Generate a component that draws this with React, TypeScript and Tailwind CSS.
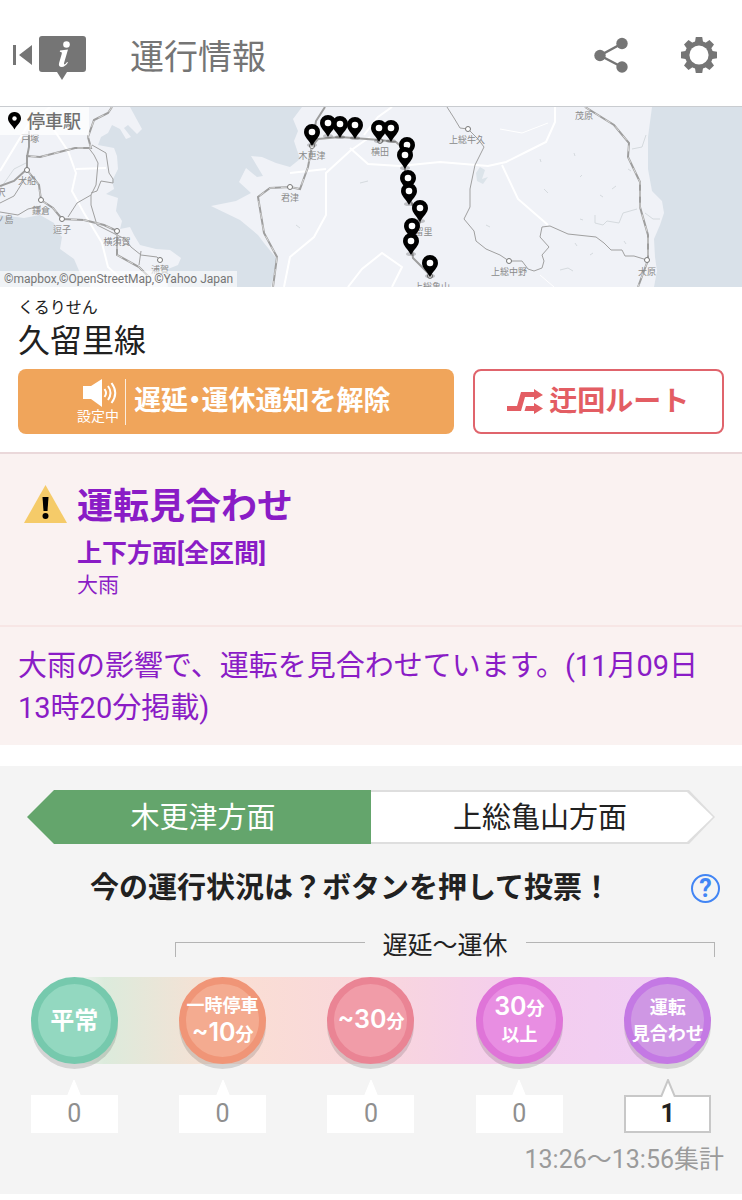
import { useState } from 'react'
import clsx from 'clsx'

type Stop = { x: number; y: number }

const stops: Stop[] = [
  { x: 328, y: 16 },
  { x: 340, y: 17 },
  { x: 355, y: 18 },
  { x: 312, y: 25 },
  { x: 379, y: 21 },
  { x: 391, y: 21 },
  { x: 407, y: 38 },
  { x: 405, y: 48 },
  { x: 408, y: 71 },
  { x: 409, y: 84 },
  { x: 420, y: 101 },
  { x: 412, y: 119 },
  { x: 411, y: 134 },
  { x: 430, y: 156 },
]

const places = [
  { name: '戸塚', x: 30, y: 35 },
  { name: '大船', x: 27, y: 77 },
  { name: '沢', x: 1, y: 89 },
  { name: '鎌倉', x: 41, y: 107 },
  { name: '江ノ島', x: 0, y: 116 },
  { name: '逗子', x: 62, y: 126 },
  { name: '横須賀', x: 117, y: 138 },
  { name: '浦賀', x: 160, y: 166 },
  { name: '木更津', x: 312, y: 52 },
  { name: '君津', x: 290, y: 94 },
  { name: '横田', x: 380, y: 48 },
  { name: '久留里', x: 419, y: 128 },
  { name: '上総亀山', x: 432, y: 183 },
  { name: '上総牛久', x: 467, y: 36 },
  { name: '上総中野', x: 509, y: 168 },
  { name: '茂原', x: 584, y: 12 },
  { name: '大原', x: 647, y: 168 },
]

const stations: Stop[] = [
  { x: 27, y: 63 },
  { x: 41, y: 93 },
  { x: 62, y: 112 },
  { x: 117, y: 124 },
  { x: 160, y: 153 },
  { x: 290, y: 80 },
  { x: 312, y: 39 },
  { x: 380, y: 34 },
  { x: 430, y: 169 },
  { x: 468, y: 22 },
  { x: 509, y: 154 },
  { x: 647, y: 153 },
]

export default function App() {
  return (
    <div className="min-h-screen bg-white font-['Roboto','Noto_Sans_CJK_JP',sans-serif] text-[#212121]">
      <Header />
      <RouteMap />
      <LineInfo />
      <Alert />
      <Vote />
    </div>
  )
}

function Header() {
  return (
    <header className="flex h-[106px] items-center pt-1 pr-6 pl-3 text-[#757575]">
      <button aria-label="戻る" className="pt-1">
        <svg width="76" height="46" viewBox="0 0 76 46" fill="currentColor">
          <path d="M1 11h3v20H1zM20 11v20L7 21z" />
          <path d="M30 2h41q3 0 3 3v30q0 3-3 3H55l-5 8-5-8H30q-3 0-3-3V5q0-3 3-3z" />
          <circle cx="54.500" cy="10.500" r="3.300" fill="#fff" />
          <path d="M48 16.500l8-1-3.800 13c-.5 2 .2 2.300 1.200 1.400l1.700-2 .9.700c-2 3-4 4.400-6.200 4.400-2.400 0-3.400-1.500-2.700-4l2.600-9c.5-1.800-.2-2.200-1.900-2.300z" fill="#fff" />
        </svg>
      </button>
      <h1 className="ml-[42px] flex-1 pt-1 text-[34px] leading-[48px]">運行情報</h1>
      <button aria-label="共有" className="mr-[51px]">
        <svg width="36" height="36" viewBox="0 0 36 36" fill="currentColor">
          <path d="M29 6.500L7 18.500l22 11.500" fill="none" stroke="currentColor" strokeWidth="2.400" />
          <circle cx="7" cy="18.500" r="5.700" />
          <circle cx="29" cy="6.500" r="5.700" />
          <circle cx="29" cy="30" r="5.700" />
        </svg>
      </button>
      <button aria-label="設定">
        <svg width="38" height="38" viewBox="-19 -19 38 38" fill="currentColor">
          {[0, 45, 90, 135].map(a => (
            <path key={a} d="M-3.200-18h6.400l1 6V12l-1 6h-6.400l-1-6v-24z" transform={`rotate(${a})`} />
          ))}
          <circle r="14" />
          <circle r="9.600" fill="#fff" />
        </svg>
      </button>
    </header>
  )
}

function RouteMap() {
  return (
    <section className="relative h-[181px] overflow-hidden border-t border-[#c9ccd0]">
      <svg className="h-full w-full" viewBox="0 0 742 180" preserveAspectRatio="xMidYMid slice">
        <rect width="742" height="180" fill="#f0f2f7" />

        {/* sea */}
        <g fill="#d9e1e9">
          <path d="M130 0L142 22 137 27 128 18 124 21 131 30 126 32 120 22 112 18 108 26 101 30 98 38 114 41 117 49 118 62 112 74 114 82 106 87 118 91 116 104 122 114 120 122 130 120 134 128 140 138 156 142 170 143 181 151 178 158 168 162 166 170 168 180H271L277 152 264 136 258 128 240 113 211 99 236 94 251 86 239 75 246 61 257 70 263 69 251 49 262 50 276 56 290 60 300 52 294 34 298 24 293 12 302 0z" />
          <path d="M0 108l24 3 16-3 14 8 3 8 5 6-2 12 14 10 6 14 10 12 2 12H0z" />
          <path d="M742 0H652L648 30 648 62 652 84 662 94 664 106 660 118 654 132 655 150 657 164 654 180H742z" />
        </g>
        <path d="M476 66l4-6 5 3-3 9 6-2-5 7-6-3z" fill="#dce4ea" />

        {/* roads */}
        <g fill="none" stroke="#fff" strokeWidth="2">
          <path d="M48 14l20 30 8 22-4 18 12 22 18 30 6 24 20 18" />
          <path d="M76 62l30-1M0 64l28-46 22-18" />
          <path d="M284 180l6-30 24-20 12-22v-42l24-22 20-14M290 66l36-4M350 41l18 16 32 2 40-4 48 4 18-4 24-12 16-8 9-20V0M364 28l14-18 14-10" />
          <path d="M502 58l16 34 30 26M392 180l10-20-20-14-20 16-14 18" />
          <path d="M500 22l22 4 26-10M540 168l14 12" strokeWidth="1" />
        </g>
        <g fill="none" stroke="#d5dade" strokeWidth="1">
          <path d="M595 108v8l8 2 4-4 12 2 4-10 14-4M632 42l10-2 4-12M645 106l8 6h7M360 76l8-2M560 163l8-2 5 3M540 52l1 3M580 70l2-2M574 46l1 3M548 86l-4-4M612 82l4-3M628 62l3 2M600 88l3 2M296 118l4 3M486 118l4 2M575 136l2 3M580 112l3 1M590 148l3-2M624 134l2 3" />
          <path d="M0 82l14-20 12-6" />
        </g>

        {/* railways */}
        <g fill="none" stroke="#a0a0a0" strokeWidth="1">
          <path d="M88 40l6 8 4 8-2 22-5 10v10l6 20 12 6 16 8 6 8 10 8 16 2 3 3M91 88l-14 8-9 14M92 38l14 8 3 20 4 6v4l-12-2-4 10-6 2M141 144l-2 14M0 96l14-7 12-19M0 105l18 3 10-6 13-3" />
          <path d="M447 0L454 11 460 21 468 22 478 32 484 40 475 58 470 82 470 100 464 112 474 124 476 134 486 142 500 148 509 154H522L528 162 534 164 542 161 544 154 542 148 549 140 540 130 542 120 550 119 568 127 596 130 604 136 611 143H622L625 149H634L647 153" />
        </g>
        <g fill="none" stroke="#9e9e9e" strokeWidth="2">
          <path d="M112 0L108 6 94 13 88 30 91 41 75 41 40 50 27 49 27 62M29 24V40L27 50V62L14 74 0 79M27 63L39 78 41 93 53 101 62 112 84 113 104 118 117 124V148L139 160 149 170" />
          <path d="M273 180L277 150 264 126 258 90 270 81 290 80 300 82 308 60 312 39 316 14 325 0" />
          <path d="M312 39L318 32 340 30 380 33 396 35 404 42 405 64 409 90 420 115 411 136 413 151 430 168" />
          <path d="M585 0L614 18 629 36 628 50 640 75 640 100 648 128V153L638 180" />
        </g>
        <g fill="none" stroke="#d6d6d6" strokeWidth="1" strokeDasharray="6 6">
          <path d="M112 0L108 6 94 13 88 30 91 41 75 41 40 50 27 49M27 63L39 78 41 93 53 101 62 112 84 113 104 118 117 124V148L139 160 149 170" />
          <path d="M273 180L277 150 264 126 258 90 270 81 290 80 300 82 308 60 312 39" />
          <path d="M585 0L614 18 629 36 628 50 640 75 640 100 648 128V153L638 180" />
        </g>

        {stations.map(s => (
          <circle key={`${s.x}-${s.y}`} cx={s.x} cy={s.y} r="2.500" fill="#fff" stroke="#777" />
        ))}
        <g fill="#8a8a8a" fontSize="9" textAnchor="middle">
          {places.map(p => (
            <text key={p.name} x={p.x} y={p.y}>{p.name}</text>
          ))}
        </g>
        {stops.map(s => (
          <g key={`${s.x}-${s.y}`} transform={`translate(${s.x} ${s.y})`}>
            <ellipse cx="0" cy="13" rx="5" ry="2" fill="#000" opacity=".2" />
            <path d="M0-8a8 8 0 0 1 8 8c0 5-5 8-8 14-3-6-8-9-8-14a8 8 0 0 1 8-8z" />
            <circle r="3.300" fill="#fff" />
          </g>
        ))}
      </svg>
      <div className="absolute top-0 left-0 flex h-[28px] items-center gap-1.5 bg-white/75 px-2 text-[18px] font-medium text-[#707070]">
        <svg width="13" height="18" viewBox="0 0 13 18">
          <path d="M6.500 0A6.300 6.300 0 0 1 13 6.500c0 4-4 6-6.500 11C4 12.500 0 10.500 0 6.500A6.300 6.300 0 0 1 6.500 0z" fill="#000" />
          <circle cx="6.500" cy="6.500" r="2.200" fill="#fff" />
        </svg>
        停車駅
      </div>
      <p className="absolute bottom-0 left-0 bg-white/60 px-1 text-[12px] leading-4 text-[#757575]">
        ©mapbox,©OpenStreetMap,©Yahoo Japan
      </p>
    </section>
  )
}

function LineInfo() {
  return (
    <section className="px-[18px] pt-[10px] pb-[18px]">
      <p className="text-[16px] leading-[22px]">くるりせん</p>
      <h2 className="text-[32px] leading-[44px]">久留里線</h2>
      <div className="mt-1.5 grid grid-cols-[435fr_251fr] gap-[19px]">
        <button className="flex h-[65px] items-center justify-center rounded-lg bg-[#f0a55b] pr-1 text-white">
          <span className="flex flex-col items-center border-r border-white/80 pr-1.5">
            <svg className="ml-1" width="34" height="28" viewBox="0 0 34 28" fill="#fff">
              <path d="M0 7h8L19 0v28L8 20H0z" />
              <g fill="none" stroke="#fff" strokeWidth="2">
                <path d="M21.500 10q3 4 0 8M25 7q5 7 0 14M28.500 4q7.500 10 0 20" />
              </g>
            </svg>
            <span className="text-[14px] leading-[18px]">設定中</span>
          </span>
          <span className="ml-2 text-[27px] font-bold [font-feature-settings:'halt']">遅延・運休通知を解除</span>
        </button>
        <button className="flex h-[65px] items-center justify-center gap-1.5 rounded-lg border-2 border-[#e0646c] bg-white text-[28px] font-bold text-[#e35d63]">
          <svg width="36" height="26" viewBox="0 0 36 26" fill="currentColor">
            <path d="M0 17h10l4-14h13V0l9 6-9 5V8h-9l-4 14H0z" />
            <path d="M19 17h8v-3l9 5.500-9 5.500v-3H17.500z" />
          </svg>
          迂回ルート
        </button>
      </div>
    </section>
  )
}

function Alert() {
  return (
    <section className="border-t-2 border-[#ead8da] bg-[#faf2f1] text-[#8a1cc6]">
      <div className="flex gap-[10px] border-b-2 border-[#f7e6e5] pt-[27px] pb-[26px] pl-6">
        <svg className="mt-1" width="43" height="38" viewBox="0 0 43 38">
          <path d="M21.500 0L43 38H0z" fill="#f5cb69" />
          <path d="M18.500 12h6l-1 14h-4z" fill="#000" />
          <circle cx="21.500" cy="31" r="3" fill="#000" />
        </svg>
        <div>
          <h2 className="text-[36px] leading-[52px] font-bold">運転見合わせ</h2>
          <p className="mt-1 text-[25px] leading-[34px] font-bold">上下方面[全区間]</p>
          <p className="text-[21px] leading-7">大雨</p>
        </div>
      </div>
      <p className="px-[18px] pt-[18px] pb-4 text-[29px] leading-[42px]">
        大雨の影響で、運転を見合わせています。(11月09日13時20分掲載)
      </p>
    </section>
  )
}

function Vote() {
  const [direction, setDirection] = useState('up')

  return (
    <section className="mt-[21px] bg-[#f4f4f4] pt-6 pb-[18px]">
      <div className="flex px-[27px]">
        <Tab left active={direction === 'up'} onClick={() => setDirection('up')}>木更津方面</Tab>
        <Tab active={direction === 'down'} onClick={() => setDirection('down')}>上総亀山方面</Tab>
      </div>

      <div className="mt-6 flex items-center gap-2 pr-[22px] pl-[18px]">
        <h3 className="flex-1 text-center text-[29px] leading-10 font-bold whitespace-nowrap">今の運行状況は？ボタンを押して投票！</h3>
        <button aria-label="ヘルプ" className="h-[29px] w-[29px] rounded-full border-2 border-[#4285f4] text-[25px] leading-[25px] font-bold text-[#4285f4]">?</button>
      </div>

      <div className="mt-[22px] mr-[27px] ml-[175px] flex items-center text-[25px] leading-8">
        <span className="mt-[7px] h-[15px] flex-1 border-t border-l border-[#b4b4b4]" />
        <span className="px-[18px]">遅延〜運休</span>
        <span className="mt-[7px] h-[15px] flex-1 border-t border-r border-[#b4b4b4]" />
      </div>

      <div className="mt-[15px] grid grid-cols-5 justify-items-center bg-[linear-gradient(to_right,transparent_10%,#dcebdc_14%,#fadfd3_30%,#f9d7dc_50%,#f4cdee_70%,#f0cff4_90%,transparent_90%)]">
        <VoteButton className="border-[#76c9ad] bg-[#93d8c0]"><Label big>平常</Label></VoteButton>
        <VoteButton className="border-[#f09577] bg-[#f4ab90]">
          <Label>一時停車</Label>
          <Label><Num>~10</Num>分</Label>
        </VoteButton>
        <VoteButton className="border-[#ea8494] bg-[#f19ca8]"><Label><Num>~30</Num>分</Label></VoteButton>
        <VoteButton className="border-[#df74d8] bg-[#e88ee2]">
          <Label><Num>30</Num>分</Label>
          <Label>以上</Label>
        </VoteButton>
        <VoteButton className="border-[#c479e4] bg-[#cf97e4]">
          <Label>運転</Label>
          <Label>見合わせ</Label>
        </VoteButton>
      </div>

      <div className="mt-[31px] grid grid-cols-5 justify-items-center">
        {[0, 0, 0, 0, 1].map((n, i) => <Count key={i} value={n} />)}
      </div>
      <p className="mt-[11px] mr-[18px] text-right text-[25px] leading-8 text-[#9b9b9b]">13:26〜13:56集計</p>
    </section>
  )
}

function Tab({ left, active, onClick, children }: { left?: boolean; active: boolean; onClick: () => void; children: React.ReactNode }) {
  const shape = left
    ? '[clip-path:polygon(27px_0,100%_0,100%_100%,27px_100%,0_50%)]'
    : '[clip-path:polygon(0_0,calc(100%_-_26px)_0,100%_50%,calc(100%_-_26px)_100%,0_100%)]'
  return (
    <button
      onClick={onClick}
      aria-pressed={active}
      className={clsx('h-[54px] flex-1 text-[29px]', shape, active ? 'bg-[#64a56c] text-white' : 'bg-[#dedede]')}
    >
      <span className={clsx('flex h-full', !active && 'py-0.5', !active && (left ? 'pl-0.5' : 'pr-0.5'))}>
        <span className={clsx('flex flex-1 items-center justify-center pt-1', shape, left ? 'pl-2' : 'pr-1', !active && 'bg-white')}>{children}</span>
      </span>
    </button>
  )
}

function VoteButton({ className, children }: { className: string; children: React.ReactNode }) {
  return (
    <button className={clsx('flex h-[87px] w-[87px] flex-col items-center justify-center rounded-full border-[7px] text-white shadow-[0_5px_0_rgba(0,0,0,0.13)]', className)}>
      {children}
    </button>
  )
}

function Label({ big, children }: { big?: boolean; children: React.ReactNode }) {
  return <span className={clsx('font-bold whitespace-nowrap', big ? 'text-[24px] leading-8' : 'text-[18px] leading-[26px]')}>{children}</span>
}

function Num({ children }: { children: React.ReactNode }) {
  return <span className="font-['Inter',sans-serif] text-[25px] font-semibold">{children}</span>
}

function Count({ value }: { value: number }) {
  const on = value > 0
  return (
    <div className={clsx('relative flex h-[38px] w-[87px] items-center justify-center bg-white text-[25px]', on ? 'border-2 border-[#c8c8c8] font-bold' : 'text-[#8f8f8f]')}>
      <svg className={clsx('absolute left-1/2 -translate-x-1/2', on ? '-top-[18px]' : '-top-4')} width="16" height="18" viewBox="0 0 16 18">
        <path d="M1 18L8 1l7 17" fill="#fff" stroke={on ? '#c8c8c8' : '#fff'} strokeWidth={on ? 2 : 1} />
      </svg>
      {value}
    </div>
  )
}
